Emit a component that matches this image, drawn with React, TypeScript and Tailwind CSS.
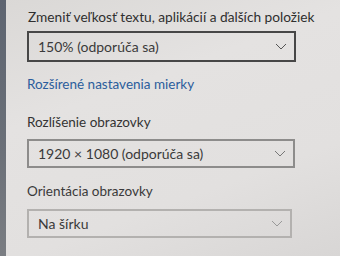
const Chevron = ({ color }: { color: string }) => (
  <svg width="12" height="7" viewBox="0 0 12 7" fill="none" className={color}>
    <path d="M1 1l5 5 5-5" stroke="currentColor" strokeWidth="1" />
  </svg>
)

const Dropdown = ({ value, border, width, height, chevron }: { value: string; border: string; width: string; height: string; chevron: string }) => (
  <div className={`flex items-center justify-between border-2 pl-[9px] pr-[7px] ${border} ${width} ${height}`}>
    <span className="text-[14px] text-[#3a3a3a]">{value}</span>
    <Chevron color={chevron} />
  </div>
)

export default function App() {
  return (
    <div className="flex w-[340px] h-[256px] overflow-hidden bg-[linear-gradient(160deg,#dad8d6_0%,#e4e2e1_35%,#e2e0df_70%,#d8d6d5_100%)] font-['Lato',sans-serif]">
      <div className="w-[6px] h-full bg-[linear-gradient(180deg,#5d6470,#6b7078_60%,#7a7d82)]" />
      <div className="flex flex-col pl-[21px] pt-[7px]">
        <div className="pl-[1px] text-[13.7px] leading-[20px] text-[#2f2f2f] whitespace-nowrap">Zmeniť veľkosť textu, aplikácií a ďalších položiek</div>
        <div className="mt-[4px]">
          <Dropdown value="150% (odporúča sa)" border="border-[#474747]" width="w-[269px]" height="h-[31px]" chevron="text-[#555]" />
        </div>
        <div className="mt-[12px] text-[13.5px] leading-[20px] text-[#2b5d9c]">Rozšírené nastavenia mierky</div>
        <div className="mt-[18px] text-[13.5px] leading-[20px] text-[#333]">Rozlíšenie obrazovky</div>
        <div className="mt-[7px]">
          <Dropdown value="1920 × 1080 (odporúča sa)" border="border-[#8d8c8b]" width="w-[268px]" height="h-[29px]" chevron="text-[#777]" />
        </div>
        <div className="mt-[13px] text-[13.5px] leading-[20px] text-[#3a3a3a]">Orientácia obrazovky</div>
        <div className="mt-[8px]">
          <Dropdown value="Na šírku" border="border-[#b3b1af]" width="w-[265px]" height="h-[29px]" chevron="text-[#999]" />
        </div>
      </div>
    </div>
  )
}
